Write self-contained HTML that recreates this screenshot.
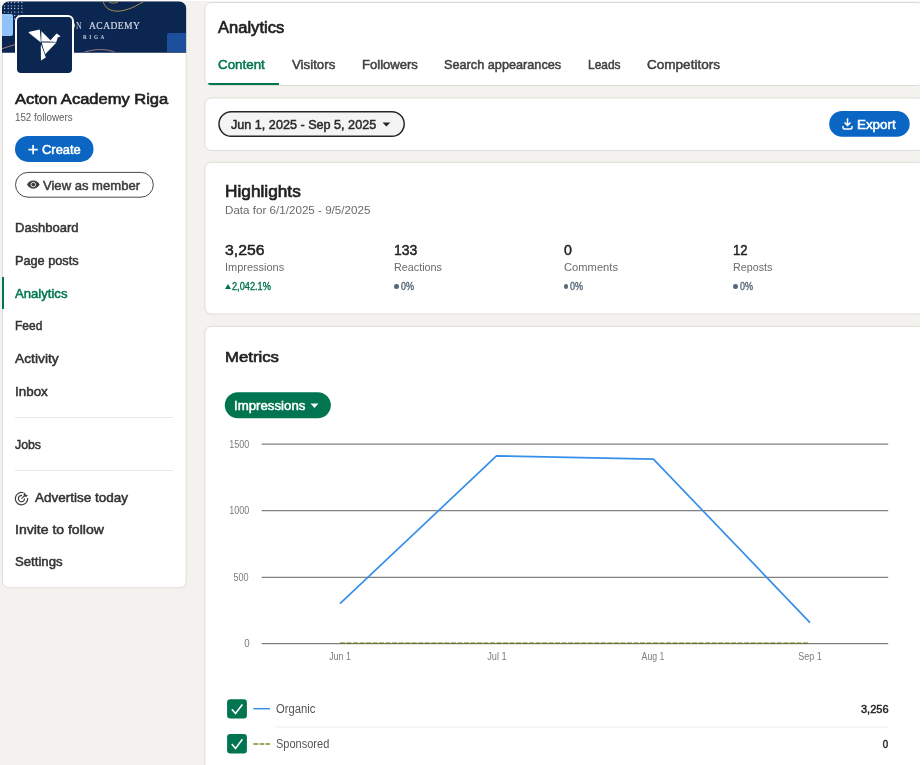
<!DOCTYPE html>
<html lang="en">
<head>
<meta charset="utf-8">
<title>Analytics | Acton Academy Riga</title>
<style>
*{box-sizing:border-box;margin:0;padding:0}
html,body{width:924px;height:765px;overflow:hidden;background:#fff}
body{font-family:"Liberation Sans",sans-serif;color:#1f1f1f;position:relative}
#page{position:absolute;left:0;top:0;width:920px;height:765px;background:#f4f2ee;overflow:hidden}
.card{position:absolute;background:#fff;border:1px solid #e4e2dd;border-radius:8px}
.t{position:absolute;white-space:nowrap;line-height:20px;height:20px}
.a{position:absolute}
.hr{position:absolute;height:1px;background:#e8e8e8}
</style>
</head>
<body>
<div id="page">
<div class="a" style="left:0;top:0;width:920px;height:1px;background:#fff"></div>

<!-- cards -->
<svg class="a" style="left:0;top:0" width="920" height="765" viewBox="0 0 920 765">
  <g fill="#fff" stroke="#dedcd7" stroke-width="1">
  <rect x="2.50" y="1.90" width="183.70" height="585.90" rx="6.5"/>
  <rect x="204.90" y="2.50" width="718.60" height="83.00" rx="6.5"/>
  <rect x="204.90" y="97.90" width="718.60" height="52.60" rx="6.5"/>
  <rect x="204.90" y="162.30" width="718.60" height="151.70" rx="6.5"/>
  <rect x="204.90" y="326.30" width="718.60" height="463.20" rx="6.5"/>
  </g>
  <path d="M2 52.700V8.400a7 7 0 0 1 7-7H179.100a7 7 0 0 1 7 7V52.700z" fill="#0b2650"/>
</svg>

<!-- SIDEBAR graphics -->
<div class="a" id="banner" style="left:2px;top:2px;width:184px;height:50px;background:#0b2650;border-radius:7px 7px 0 0;overflow:hidden">
  <div class="a" style="left:0;top:12px;width:11px;height:22px;background:#8fc1fb;border-radius:0 2px 2px 0"></div>
  <div class="a" style="left:165px;top:31px;width:19px;height:20px;background:#1d4f9d;border-radius:2px 0 0 0"></div>
  <svg class="a" style="left:0;top:0" width="184" height="51" viewBox="0 0 184 51" fill="none">
    <path d="M101.500 0 C102 5 108 9.500 116 9.200 C126 8.500 134 4 141 0" stroke="#c9aa4c" stroke-width="0.800"/>
    <path d="M107 0 C109 1.500 113 1.500 116 0" stroke="#c9aa4c" stroke-width="0.700"/>
    <path d="M0 46.700 L13.500 42.400" stroke="#c98a8a" stroke-width="0.800"/>
    <path d="M80 51 C88 47.500 105 45.500 114.500 51" stroke="#c98a8a" stroke-width="0.800"/>
    <g fill="#b9d2f2"><circle cx="2.6" cy="0.6" r=".65"/><circle cx="6.2" cy="0.6" r=".65"/><circle cx="9.4" cy="0.6" r=".65"/><circle cx="12.7" cy="0.6" r=".65"/><circle cx="16.3" cy="0.6" r=".65"/><circle cx="19.9" cy="0.6" r=".65"/><circle cx="2.6" cy="3.8" r=".65"/><circle cx="6.2" cy="3.8" r=".65"/><circle cx="9.4" cy="3.8" r=".65"/><circle cx="12.7" cy="3.8" r=".65"/><circle cx="16.3" cy="3.8" r=".65"/><circle cx="19.9" cy="3.8" r=".65"/><circle cx="2.6" cy="6.5" r=".65"/><circle cx="6.2" cy="6.5" r=".65"/><circle cx="9.4" cy="6.5" r=".65"/><circle cx="12.7" cy="6.5" r=".65"/><circle cx="16.3" cy="6.5" r=".65"/><circle cx="19.9" cy="6.5" r=".65"/><circle cx="2.6" cy="10.1" r=".65"/><circle cx="6.2" cy="10.1" r=".65"/><circle cx="9.4" cy="10.1" r=".65"/><circle cx="12.7" cy="10.1" r=".65"/><circle cx="16.3" cy="10.1" r=".65"/><circle cx="19.9" cy="10.1" r=".65"/><circle cx="2.6" cy="13.5" r=".65"/><circle cx="6.2" cy="13.5" r=".65"/><circle cx="9.4" cy="13.5" r=".65"/><circle cx="12.7" cy="13.5" r=".65"/><circle cx="16.3" cy="13.5" r=".65"/><circle cx="2.6" cy="17.0" r=".65"/><circle cx="6.2" cy="17.0" r=".65"/><circle cx="9.4" cy="17.0" r=".65"/><circle cx="12.7" cy="17.0" r=".65"/></g>
  </svg>
</div>
<div class="a" id="logo" style="z-index:2;left:15px;top:15px;width:59px;height:60px;background:#0b2650;border:2px solid #fff;border-radius:6px">
  <svg class="a" style="left:0;top:0" width="55" height="55" viewBox="0 0 55 55">
    <g fill="#fff">
      <path d="M11.500 15 L22.800 12.500 L23.900 25.400 L12 16 Z"/>
      <path d="M24.300 14 L24.300 24.600 L34.600 24.600 Z"/>
      <path d="M33.200 24.600 L33.200 23.600 L39.600 16.500 L43.600 19.300 L40.700 20.500 L39.300 24.900 Z"/>
      <path d="M24.600 25.600 L39.400 25.600 L28.200 37.300 Z"/>
      <path d="M24.200 27.800 L28.800 40.600 L24 43.400 L23.800 29 Z"/>
    </g>
  </svg>
</div>
<div class="a" style="left:2px;top:276.500px;width:2px;height:32.700px;background:#01754f"></div>
<div class="hr" style="left:15px;top:417px;width:158px"></div>
<div class="hr" style="left:15px;top:470px;width:158px"></div>

<!-- HEADER graphics -->
<div class="a" style="left:207.600px;top:83px;width:71.200px;height:2px;background:#01754f;border-radius:0 0 0 3px"></div>

<!-- FILTER graphics -->
<svg class="a" style="left:216px;top:109px" width="192" height="30" viewBox="0 0 192 30"><rect x="3" y="2.750" width="185.200" height="24.500" rx="12.250" fill="#f4f4f4" stroke="#262626" stroke-width="1.500"/></svg>

<!-- HIGHLIGHT graphics -->
<div class="a" style="left:224.800px;top:283.600px;border-left:3.200px solid transparent;border-right:3.200px solid transparent;border-bottom:5px solid #01754f"></div>
<div class="a" style="left:394.400px;top:284.200px;width:4.600px;height:4.600px;border-radius:2.300px;background:#56687a"></div>
<div class="a" style="left:563.900px;top:284.200px;width:4.600px;height:4.600px;border-radius:2.300px;background:#56687a"></div>
<div class="a" style="left:733.400px;top:284.200px;width:4.600px;height:4.600px;border-radius:2.300px;background:#56687a"></div>

<!-- METRICS graphics -->

<svg class="a" style="left:0;top:0" width="920" height="765" viewBox="0 0 920 765" fill="none">
  <rect x="15" y="135.900" width="78.500" height="26" rx="13" fill="#0a66c2"/>
  <rect x="15.500" y="172.400" width="137.800" height="24.800" rx="12.400" fill="#fff" stroke="#484848" stroke-width="1"/>
  <rect x="829.200" y="111" width="80.500" height="25.800" rx="12.900" fill="#0a66c2"/>
  <rect x="224.800" y="392.200" width="106" height="26" rx="13" fill="#01754f"/>
  <path d="M382.500 122.400h7.800l-3.900 4.100z" fill="#262626"/>
  <path d="M310.500 403.600h8l-4 4.300z" fill="#fff"/>
  <g stroke="#7f7f7f" stroke-width="1.200">
    <path d="M261.600 444.100H888.200"/><path d="M261.600 510.600H888.200"/><path d="M261.600 577.300H888.200"/><path d="M261.600 643.600H888.200"/>
  </g>
  <path d="M340 643.200H808" stroke="#6f7726" stroke-width="1.600" stroke-dasharray="5 1.520"/>
  <path d="M340 603.700L496.500 455.900L653.400 459.100L810 622.600" stroke="#378fe9" stroke-width="1.700" stroke-linejoin="miter"/>
  <g transform="translate(26.800,180.100)"><path d="M6.500 .4C3.400 .4 1.100 2.400.2 4.500c.9 2.100 3.200 4.100 6.300 4.100s5.400-2 6.300-4.100C11.900 2.400 9.600 .4 6.500 .4z" fill="#3d3d3d"/><circle cx="6.500" cy="4.500" r="2.300" fill="none" stroke="#fff" stroke-width=".85"/></g>
  <g transform="translate(14.500,491.400)" fill="none" stroke="#444" stroke-width="1.250"><path d="M13.180 6.660A6.200 6.200 0 1 1 9.120 1.370"/><path d="M10.100 7.200A3.100 3.100 0 1 1 7.540 4.150"/><path d="M7 7.200L10.800 3.400" stroke-width="1.200"/><path d="M10.300 .900l.7 2.300 2.400.7-1.700 1.600-2.100-.5-.6-2.100z" fill="#444" stroke="none"/></g>
  <g transform="translate(28.100,144.600)"><path d="M5 .3v9.400M.3 5h9.400" stroke="#fff" stroke-width="1.700"/></g>
  <g transform="translate(842,118.200)" fill="none" stroke="#fff" stroke-width="1.500"><path d="M5.500 0v7M2.500 4.300l3 3 3-3M1 7.800v1.400a1.500 1.500 0 0 0 1.500 1.500h6a1.500 1.500 0 0 0 1.500-1.500V7.800"/></g>
  <!-- legend -->
  <rect x="227.100" y="699.200" width="19.800" height="19.300" rx="3.200" fill="#01754f"/>
  <path d="M231.800 709.200L235.500 713.500L242.400 704.400" stroke="#fff" stroke-width="1.600"/>
  <rect x="227.100" y="734.100" width="19.800" height="19.300" rx="3.200" fill="#01754f"/>
  <path d="M231.800 744.100L235.500 748.400L242.400 739.300" stroke="#fff" stroke-width="1.600"/>
  <path d="M253.400 708.700H270" stroke="#378fe9" stroke-width="1.500"/>
  <path d="M253.400 743.900H270" stroke="#7f8a2a" stroke-width="1.500" stroke-dasharray="4.800 1.300"/>
  <path d="M276 727H888.200" stroke="#ececec" stroke-width="1"/>
</svg>

<div class="a" id="texts" style="left:0;top:0;width:920px;height:765px;will-change:transform">
<div class="t" id="bO" style="left:67.60px;transform-origin:0 50%;top:15.20px;font-size:11px;font-weight:400;color:#d3dae6;transform:scaleX(0.9179);font-family:'Liberation Serif',serif;">O</div>
<div class="t" id="bN" style="left:75.80px;transform-origin:0 50%;top:15.20px;font-size:11px;font-weight:400;color:#d3dae6;transform:scaleX(0.7167);font-family:'Liberation Serif',serif;">N</div>
<div class="t" id="bA" style="left:89.00px;transform-origin:0 50%;top:15.20px;font-size:11px;font-weight:400;color:#d3dae6;transform:scaleX(0.8693);font-family:'Liberation Serif',serif;letter-spacing:.5px;-webkit-text-stroke:.2px #d3dae6;">ACADEMY</div>
<div class="t" id="bR" style="left:82.90px;transform-origin:0 50%;top:26.90px;font-size:5.2px;font-weight:700;color:#c9d1e0;transform:scaleX(0.9978);font-family:'Liberation Serif',serif;letter-spacing:2.6px;">RIGA</div>
<div class="t" id="title" style="left:15.10px;transform-origin:0 50%;top:88.50px;font-size:15.5px;font-weight:400;color:#1f1f1f;transform:scaleX(1.0647);-webkit-text-stroke:0.65px #1f1f1f;">Acton Academy Riga</div>
<div class="t" id="foll" style="left:15.10px;transform-origin:0 50%;top:107.50px;font-size:10px;font-weight:400;color:#5e5e5e;transform:scaleX(0.9776);">152 followers</div>
<div class="t" id="create" style="left:41.80px;transform-origin:0 50%;top:140.20px;font-size:13px;font-weight:400;color:#fff;transform:scaleX(0.9941);-webkit-text-stroke:0.50px #fff;">Create</div>
<div class="t" id="vam" style="left:42.80px;transform-origin:0 50%;top:175.90px;font-size:13px;font-weight:400;color:#3d3d3d;transform:scaleX(1.0044);-webkit-text-stroke:0.50px #3d3d3d;">View as member</div>
<div class="t" id="nav0" style="left:15.10px;transform-origin:0 50%;top:218.00px;font-size:13px;font-weight:400;color:#333;transform:scaleX(0.9999);-webkit-text-stroke:0.50px #333;">Dashboard</div>
<div class="t" id="nav1" style="left:15.10px;transform-origin:0 50%;top:250.70px;font-size:13px;font-weight:400;color:#333;transform:scaleX(0.9778);-webkit-text-stroke:0.50px #333;">Page posts</div>
<div class="t" id="nav2" style="left:15.10px;transform-origin:0 50%;top:284.40px;font-size:13px;font-weight:400;color:#01754f;transform:scaleX(1.0090);-webkit-text-stroke:0.50px #01754f;">Analytics</div>
<div class="t" id="nav3" style="left:15.10px;transform-origin:0 50%;top:316.00px;font-size:13px;font-weight:400;color:#333;transform:scaleX(0.9210);-webkit-text-stroke:0.50px #333;">Feed</div>
<div class="t" id="nav4" style="left:15.10px;transform-origin:0 50%;top:348.70px;font-size:13px;font-weight:400;color:#333;transform:scaleX(1.0614);-webkit-text-stroke:0.50px #333;">Activity</div>
<div class="t" id="nav5" style="left:15.10px;transform-origin:0 50%;top:382.40px;font-size:13px;font-weight:400;color:#333;transform:scaleX(1.0310);-webkit-text-stroke:0.50px #333;">Inbox</div>
<div class="t" id="nav6" style="left:15.10px;transform-origin:0 50%;top:435.00px;font-size:13px;font-weight:400;color:#333;transform:scaleX(0.9465);-webkit-text-stroke:0.50px #333;">Jobs</div>
<div class="t" id="nav7" style="left:15.10px;transform-origin:0 50%;top:519.80px;font-size:13px;font-weight:400;color:#333;transform:scaleX(1.0780);-webkit-text-stroke:0.50px #333;">Invite to follow</div>
<div class="t" id="nav8" style="left:15.10px;transform-origin:0 50%;top:552.40px;font-size:13px;font-weight:400;color:#333;transform:scaleX(1.0131);-webkit-text-stroke:0.50px #333;">Settings</div>
<div class="t" id="adv" style="left:34.80px;transform-origin:0 50%;top:488.00px;font-size:13px;font-weight:400;color:#333;transform:scaleX(1.0367);-webkit-text-stroke:0.50px #333;">Advertise today</div>
<div class="t" id="h1" style="left:218.20px;transform-origin:0 50%;top:18.20px;font-size:16px;font-weight:400;color:#1f1f1f;transform:scaleX(1.0339);-webkit-text-stroke:0.65px #1f1f1f;">Analytics</div>
<div class="t" id="tab0" style="left:218.20px;transform-origin:0 50%;top:55.00px;font-size:13px;font-weight:400;color:#01754f;transform:scaleX(1.0275);-webkit-text-stroke:0.50px #01754f;">Content</div>
<div class="t" id="tab1" style="left:291.70px;transform-origin:0 50%;top:55.00px;font-size:13px;font-weight:400;color:#404040;transform:scaleX(1.0215);-webkit-text-stroke:0.50px #404040;">Visitors</div>
<div class="t" id="tab2" style="left:361.80px;transform-origin:0 50%;top:55.00px;font-size:13px;font-weight:400;color:#404040;transform:scaleX(1.0049);-webkit-text-stroke:0.50px #404040;">Followers</div>
<div class="t" id="tab3" style="left:443.60px;transform-origin:0 50%;top:55.00px;font-size:13px;font-weight:400;color:#404040;transform:scaleX(0.9768);-webkit-text-stroke:0.50px #404040;">Search appearances</div>
<div class="t" id="tab4" style="left:588.10px;transform-origin:0 50%;top:55.00px;font-size:13px;font-weight:400;color:#404040;transform:scaleX(0.9175);-webkit-text-stroke:0.50px #404040;">Leads</div>
<div class="t" id="tab5" style="left:646.90px;transform-origin:0 50%;top:55.00px;font-size:13px;font-weight:400;color:#404040;transform:scaleX(1.0417);-webkit-text-stroke:0.50px #404040;">Competitors</div>
<div class="t" id="date" style="left:230.90px;transform-origin:0 50%;top:114.50px;font-size:13px;font-weight:400;color:#2a2a2a;transform:scaleX(0.9704);-webkit-text-stroke:0.50px #2a2a2a;">Jun 1, 2025 - Sep 5, 2025</div>
<div class="t" id="export" style="left:857.40px;transform-origin:0 50%;top:114.50px;font-size:13px;font-weight:400;color:#fff;transform:scaleX(1.0299);-webkit-text-stroke:0.50px #fff;">Export</div>
<div class="t" id="hl" style="left:224.80px;transform-origin:0 50%;top:181.70px;font-size:16px;font-weight:400;color:#1f1f1f;transform:scaleX(1.0788);-webkit-text-stroke:0.65px #1f1f1f;">Highlights</div>
<div class="t" id="hls" style="left:224.80px;transform-origin:0 50%;top:199.60px;font-size:11.5px;font-weight:400;color:#6a6a6a;transform:scaleX(1.0107);">Data for 6/1/2025 - 9/5/2025</div>
<div class="t" id="v0" style="left:224.80px;transform-origin:0 50%;top:239.60px;font-size:15.5px;font-weight:400;color:#1f1f1f;transform:scaleX(1.0181);-webkit-text-stroke:0.50px #1f1f1f;">3,256</div>
<div class="t" id="l0" style="left:224.80px;transform-origin:0 50%;top:256.90px;font-size:11.2px;font-weight:400;color:#6a6a6a;transform:scaleX(0.9816);">Impressions</div>
<div class="t" id="v1" style="left:394.40px;transform-origin:0 50%;top:239.60px;font-size:15.5px;font-weight:400;color:#1f1f1f;transform:scaleX(0.9043);-webkit-text-stroke:0.50px #1f1f1f;">133</div>
<div class="t" id="l1" style="left:394.40px;transform-origin:0 50%;top:256.90px;font-size:11.2px;font-weight:400;color:#6a6a6a;transform:scaleX(0.9628);">Reactions</div>
<div class="t" id="v2" style="left:563.90px;transform-origin:0 50%;top:239.60px;font-size:15.5px;font-weight:400;color:#1f1f1f;transform:scaleX(0.9159);-webkit-text-stroke:0.50px #1f1f1f;">0</div>
<div class="t" id="l2" style="left:563.90px;transform-origin:0 50%;top:256.90px;font-size:11.2px;font-weight:400;color:#6a6a6a;transform:scaleX(0.9983);">Comments</div>
<div class="t" id="v3" style="left:733.40px;transform-origin:0 50%;top:239.60px;font-size:15.5px;font-weight:400;color:#1f1f1f;transform:scaleX(0.8464);-webkit-text-stroke:0.50px #1f1f1f;">12</div>
<div class="t" id="l3" style="left:733.40px;transform-origin:0 50%;top:256.90px;font-size:11.2px;font-weight:400;color:#6a6a6a;transform:scaleX(0.9599);">Reposts</div>
<div class="t" id="d0" style="left:232.10px;transform-origin:0 50%;top:277.40px;font-size:10px;font-weight:400;color:#01754f;transform:scaleX(0.9204);-webkit-text-stroke:0.35px #01754f;">2,042.1%</div>
<div class="t" id="d1" style="left:400.60px;transform-origin:0 50%;top:277.40px;font-size:10px;font-weight:400;color:#56687a;transform:scaleX(0.8995);-webkit-text-stroke:0.35px #56687a;">0%</div>
<div class="t" id="d2" style="left:570.10px;transform-origin:0 50%;top:277.40px;font-size:10px;font-weight:400;color:#56687a;transform:scaleX(0.8995);-webkit-text-stroke:0.35px #56687a;">0%</div>
<div class="t" id="d3" style="left:739.60px;transform-origin:0 50%;top:277.40px;font-size:10px;font-weight:400;color:#56687a;transform:scaleX(0.8995);-webkit-text-stroke:0.35px #56687a;">0%</div>
<div class="t" id="mt" style="left:224.80px;transform-origin:0 50%;top:346.60px;font-size:15.5px;font-weight:400;color:#1f1f1f;transform:scaleX(1.0810);-webkit-text-stroke:0.65px #1f1f1f;">Metrics</div>
<div class="t" id="imp" style="left:234.40px;transform-origin:0 50%;top:395.50px;font-size:13px;font-weight:400;color:#fff;transform:scaleX(1.0189);-webkit-text-stroke:0.50px #fff;">Impressions</div>
<div class="t" id="y1500" style="right:670.90px;transform-origin:100% 50%;top:434.80px;font-size:10px;font-weight:400;color:#7c7c7c;transform:scaleX(0.8989);">1500</div>
<div class="t" id="y1000" style="right:670.90px;transform-origin:100% 50%;top:501.30px;font-size:10px;font-weight:400;color:#7c7c7c;transform:scaleX(0.8989);">1000</div>
<div class="t" id="y500" style="right:670.90px;transform-origin:100% 50%;top:567.80px;font-size:10px;font-weight:400;color:#7c7c7c;transform:scaleX(0.9109);">500</div>
<div class="t" id="y0" style="right:670.90px;transform-origin:100% 50%;top:634.30px;font-size:10px;font-weight:400;color:#7c7c7c;transform:scaleX(0.9708);">0</div>
<div class="t" id="xJun" style="left:239.70px;width:200px;text-align:center;transform-origin:50% 50%;top:646.60px;font-size:10px;font-weight:400;color:#7c7c7c;transform:scaleX(0.8868);">Jun 1</div>
<div class="t" id="xJul" style="left:396.50px;width:200px;text-align:center;transform-origin:50% 50%;top:646.60px;font-size:10px;font-weight:400;color:#7c7c7c;transform:scaleX(0.9231);">Jul 1</div>
<div class="t" id="xAug" style="left:553.20px;width:200px;text-align:center;transform-origin:50% 50%;top:646.60px;font-size:10px;font-weight:400;color:#7c7c7c;transform:scaleX(0.8722);">Aug 1</div>
<div class="t" id="xSep" style="left:709.70px;width:200px;text-align:center;transform-origin:50% 50%;top:646.60px;font-size:10px;font-weight:400;color:#7c7c7c;transform:scaleX(0.8952);">Sep 1</div>
<div class="t" id="org" style="left:276.00px;transform-origin:0 50%;top:698.90px;font-size:12px;font-weight:400;color:#555;transform:scaleX(0.9374);">Organic</div>
<div class="t" id="spo" style="left:276.00px;transform-origin:0 50%;top:733.90px;font-size:12px;font-weight:400;color:#555;transform:scaleX(0.9182);">Sponsored</div>
<div class="t" id="orgv" style="right:31.80px;transform-origin:100% 50%;top:698.90px;font-size:11px;font-weight:400;color:#1f1f1f;transform:scaleX(1.0025);-webkit-text-stroke:0.45px #1f1f1f;">3,256</div>
<div class="t" id="spov" style="right:31.80px;transform-origin:100% 50%;top:733.90px;font-size:11px;font-weight:400;color:#1f1f1f;transform:scaleX(0.8816);-webkit-text-stroke:0.45px #1f1f1f;">0</div>
</div>
</div>
</body>
</html>
